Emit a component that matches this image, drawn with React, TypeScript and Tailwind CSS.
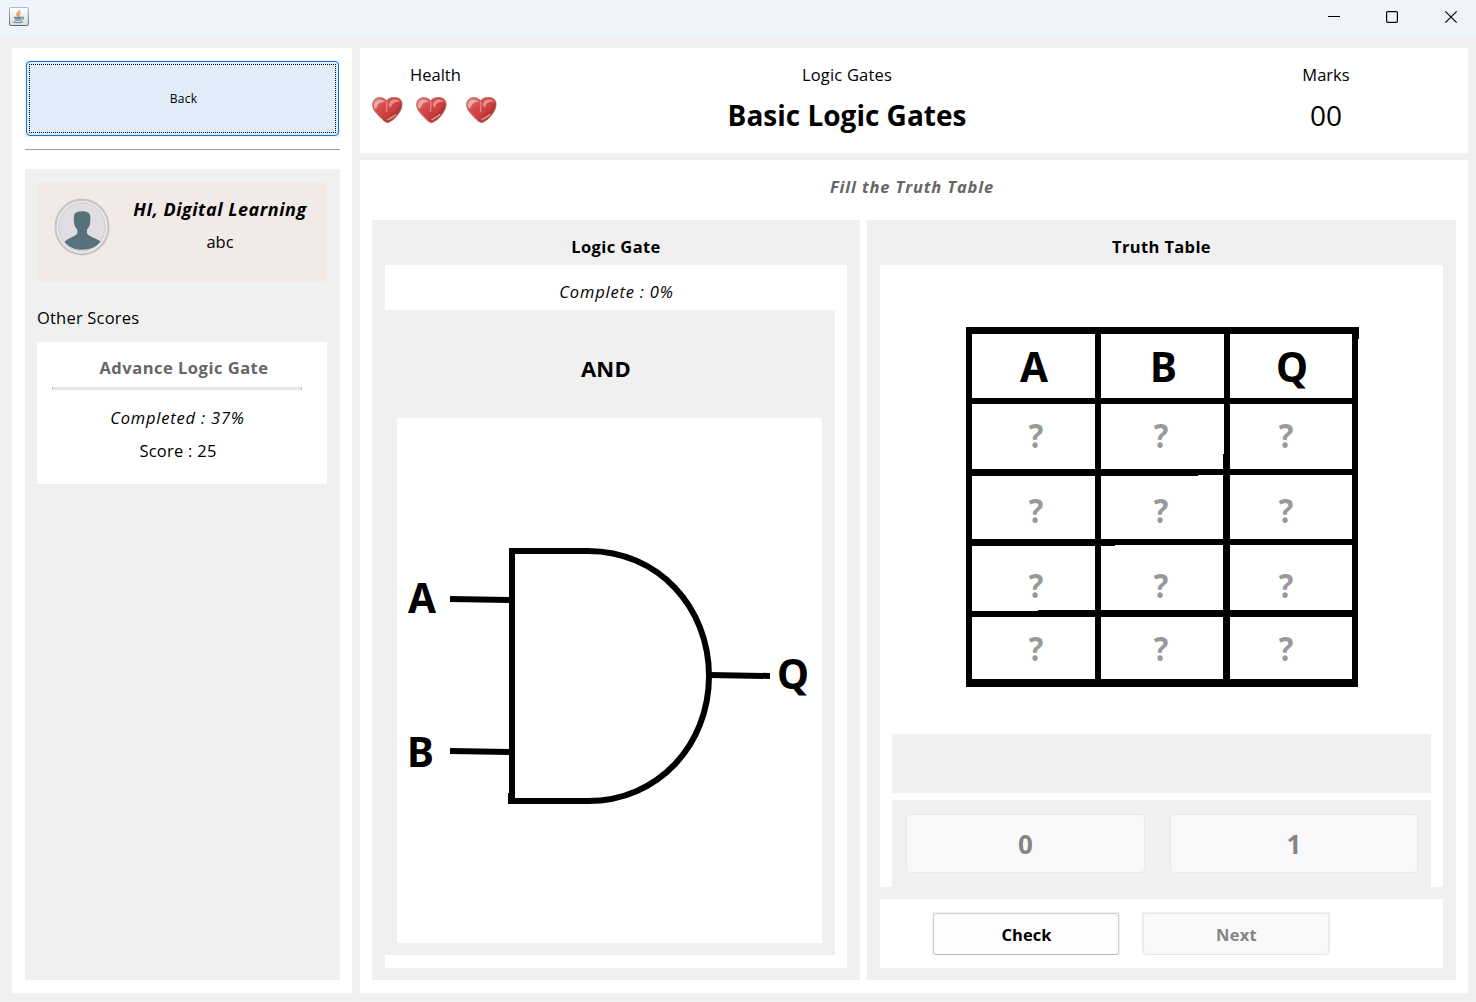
import React from "react";

function JavaIcon() {
  return (
    <svg className="ml-[9px] mt-[7px] block h-5 w-5" viewBox="0 0 20 20">
      <defs>
        <linearGradient id="cupFrame" x1="0" y1="0" x2="0" y2="1">
          <stop offset="0" stopColor="#a9b9c9" />
          <stop offset="1" stopColor="#52697d" />
        </linearGradient>
        <linearGradient id="cupFace" x1="0" y1="0" x2="0" y2="1">
          <stop offset="0" stopColor="#ffffff" />
          <stop offset="1" stopColor="#dedede" />
        </linearGradient>
      </defs>
      <rect x="0.5" y="0.5" width="18.800" height="18" rx="1.500" fill="url(#cupFace)" stroke="url(#cupFrame)" />
      <path d="M10.500 3.200c.6 1.700-2.800 2.300-2.600 4 .1.900 1 1.400 1.300 2.300M11.500 6c-1.500.5-2 1.200-1.500 2 .3.600.2 1.200-.4 1.500" fill="none" stroke="#ec8f4c" strokeWidth="1.500" />
      <path d="M4.800 10.300h8.200M5.400 11.700h7.200M6 13.200h6" stroke="#7390aa" strokeWidth="1.300" />
      <path d="M13 10.300c2.200-.8 2.200 1.600-.4 2.300" fill="none" stroke="#7390aa" strokeWidth="1.200" />
      <path d="M4 14.600c2 1.300 8 1.300 10 0" fill="none" stroke="#7390aa" strokeWidth="1.300" />
    </svg>
  );
}

function Heart() {
  return (
    <svg className="block h-[27px] w-[31px]" viewBox="0 0 31 27">
      <defs>
        <linearGradient id="heartFill" x1="0" y1="0" x2="1" y2="1">
          <stop offset="0" stopColor="#dd8a86" />
          <stop offset="0.350" stopColor="#d64a4c" />
          <stop offset="0.600" stopColor="#cb3c3e" />
          <stop offset="1" stopColor="#8e3530" />
        </linearGradient>
      </defs>
      <path d="M14.500 3.800C17 .6 21 0 24.500 .6c4 .8 6 3.700 5.500 7.700-.3 3.600-1.800 6.200-4.800 10.200-2.500 3.300-6 6-9.500 7.300-2.500-.6-5.500-3-7.500-5.300C5.500 17.300 1.500 14 .7 9.200.3 5 2 1.600 6 .8c3.500-.6 6.500.3 8.500 3z" fill="url(#heartFill)" stroke="#b0675e" strokeWidth="0.800" />
      <path d="M2 10c-.3-4 1.500-7 5-7.200 3-.1 5 .7 6 2.700-2-.8-4-.6-5.500.8C5.800 7.800 5 9 4.500 11c-.8.800-2.200.5-2.500-1z" fill="#f0c0bb" opacity="0.750" />
      <path d="M17 7.500c.2-3 2.500-4.900 6-5 3 0 4.500 1 5.100 2.400-2-.5-4.500-.2-6.300 1.200-1.400 1-2.500 2.500-2.900 4.600-.9-.4-2-1.700-1.900-3.200z" fill="#eab0a9" opacity="0.700" />
      <path d="M14.600 4.500c.9 3-.1 7-.1 10.500" fill="none" stroke="#e89a93" strokeWidth="1.300" opacity="0.800" />
      <path d="M28.600 8c-1 4.500-4 7.500-7 9.500-2 1.400-4 2.600-6 4.500" fill="none" stroke="#9c3530" strokeWidth="2.200" opacity="0.600" />
      <path d="M15.500 23c2-1.800 5.500-2.600 8.500-5.700" fill="none" stroke="#e5a59d" strokeWidth="1.600" opacity="0.850" />
      <path d="M3.500 15c2 2.600 5 5 7.500 8" fill="none" stroke="#e59c96" strokeWidth="1" opacity="0.700" />
    </svg>
  );
}

function Avatar() {
  return (
    <svg className="block h-[58px] w-[56px]" viewBox="0 0 56 58">
      <ellipse cx="28" cy="29" rx="26.500" ry="27.300" fill="#eeebea" stroke="#c6c6c6" strokeWidth="2.200" />
      <ellipse cx="28" cy="29" rx="23.300" ry="24.200" fill="#e0dee2" stroke="#cfcdd0" strokeWidth="1" />
      <path d="M20 17.500c.5-3 4-4.300 8.200-4.300 4.300 0 7.400 1.400 8 4.300.4 2 .2 4.500 0 6.500-.1 3-1.300 5.500-3.200 7.600v4c2.500 3.500 9 4.200 13.500 8-4 5.400-10.500 8.200-18.300 8.200-7.500 0-13.500-2.600-17.700-8 4-4 10-4.800 12.800-8.300v-4c-2-2-3.100-4.500-3.300-7.500-.2-2-.3-4.500 0-6.500z" fill="#58717c" />
    </svg>
  );
}

function AndGate() {
  return (
    <svg className="block h-[525px] w-[425px]" viewBox="397 418 425 525">
      <g fill="none" stroke="#000" strokeWidth="6">
        <path d="M512 801V551H588C658 551 709 607 709 676C709 745 658 801 588 801H509" />
        <path d="M450 599L512 600M450 751L512 752M709 675L770 676" />
      </g>
      <rect x="508" y="793" width="5" height="11" />
      <g fontFamily="'Noto Sans', sans-serif" fontWeight="700" fontSize="40.500">
        <text x="408" y="613.300">A</text>
        <text x="407" y="766.500">B</text>
        <text x="777" y="688.500">Q</text>
      </g>
    </svg>
  );
}

function TableLines() {
  return (
    <svg className="absolute left-[86px] top-[62px] block h-[361px] w-[394px]" viewBox="966 327 394 361">
      <path d="M966 327h393v12h-1v348h-392zM972 334v64h123v-64zM1101 334v64h123v-64zM1230 334v64h122v-64zM972 404v65h123v-65zM1101 404v65h122v-15h1v-50zM1230 404v65h122v-65zM972 476v63h123v-63zM1101 476v63h122v-64h-25v1zM1230 475v64h122v-64zM972 546v65h66v-1h57v-64zM1101 546v64h122v-65h-108v1zM1230 545v65h122v-65zM972 617v62h123v-62zM1101 617v62h122v-62zM1230 617v62h122v-62z" fillRule="evenodd" />
      <g fontFamily="'Noto Sans', sans-serif" fontWeight="700" fontSize="40.500">
        <text x="1020" y="381.500">A</text>
        <text x="1150" y="381.500">B</text>
        <text x="1276" y="381.500">Q</text>
      </g>
    </svg>
  );
}

const rows = ["h-[75px]", "h-[75px]", "h-[63px]", "h-[57px]"];

export default function App() {
  return (
    <div className="flex h-[1002px] w-[1476px] flex-col overflow-hidden bg-[#f0f0f0] font-['Open_Sans',sans-serif] text-[16.500px] leading-6 text-black">
      <header className="flex h-9 shrink-0 justify-between bg-[#eff3fb]">
        <JavaIcon />
        <svg className="mr-[18px] mt-[10px] block h-[14px] w-[131px]" viewBox="1327 10 131 14" fill="none" stroke="#000" strokeWidth="1.200">
          <path d="M1328 16.500h12" strokeWidth="1" />
          <rect x="1386.600" y="11.600" width="10.800" height="10.800" rx="1.200" />
          <path d="M1445.300 11.300l11.400 11.400M1456.700 11.300l-11.400 11.400" />
        </svg>
      </header>

      <main className="flex gap-2 pl-3 pt-3">
        <aside className="h-[945px] w-[340px] bg-white pl-[13px] pr-3 pt-3">
          <div className="h-[77px] bg-[#f0f0f0] p-px">
            <button className="flex h-[75px] w-full rounded-[4px] border border-[#0078d4] bg-[#e0edf9] p-0.5">
              <span className="flex h-full w-full items-center justify-center border border-dotted border-black pl-0.5 text-[12px] tracking-[0.200px]">Back</span>
            </button>
          </div>
          <div className="mt-3 h-px bg-[#a0a0a0]" />
          <section className="mt-[19px] h-[811px] bg-[#f0f0f0] px-3 pt-[13px]">
            <div className="flex h-[100px] w-[290px] bg-[#f2eae7] pl-[17px] pt-4">
              <Avatar />
              <div className="ml-[22px] w-[176px] text-center">
                <div className="-mt-px whitespace-nowrap text-[18px] font-bold italic tracking-[0.500px]">HI, Digital Learning</div>
                <div className="mt-[9px]">abc</div>
              </div>
            </div>
            <div className="mt-6 tracking-[0.200px]">Other Scores</div>
            <div className="mt-3 h-[142px] w-[290px] bg-white pt-[14px]">
              <div className="pl-1 text-center font-bold tracking-[0.500px] text-[#666]">Advance Logic Gate</div>
              <div className="ml-[15px] mt-[7px] h-[3px] w-[250px] border-x border-[#bcbcbc] bg-[#e6e6e6]" />
              <div className="mr-[9px] mt-4 text-center italic tracking-[0.800px]">Completed : 37%</div>
              <div className="mr-2 mt-[9px] text-center tracking-[0.250px]">Score : 25</div>
            </div>
          </section>
        </aside>

        <div className="flex w-[1108px] flex-col gap-[7px]">
          <section className="flex h-[105px] bg-white pl-3 pt-[15px]">
            <div className="w-[127px]">
              <div className="text-center">Health</div>
              <div className="mt-[10px] flex">
                <Heart />
                <div className="ml-[13px]"><Heart /></div>
                <div className="ml-[19px]"><Heart /></div>
              </div>
            </div>
            <div className="ml-[208px] w-[280px] text-center">
              <div className="tracking-[0.200px]">Logic Gates</div>
              <div className="mt-[9px] text-[28px] font-bold leading-[38px]">Basic Logic Gates</div>
            </div>
            <div className="ml-[289px] w-[100px] text-center">
              <div>Marks</div>
              <div className="mt-[9px] text-[28px] leading-[38px]">00</div>
            </div>
          </section>

          <section className="h-[833px] bg-white pl-3 pt-[15px]">
            <div className="w-[1080px] text-center font-bold italic tracking-[0.850px] text-[#666]">Fill the Truth Table</div>
            <div className="mt-[21px] flex gap-[7px]">
              <div className="h-[760px] w-[488px] bg-[#f0f0f0] pl-[13px] pt-[15px]">
                <h2 className="w-[462px] text-center font-bold tracking-[0.400px]">Logic Gate</h2>
                <div className="mt-[6px] h-[703px] w-[462px] bg-white pt-[15px]">
                  <div className="pl-px text-center italic tracking-[0.800px]">Complete : 0%</div>
                  <div className="mt-[6px] h-[645px] w-[450px] bg-[#f0f0f0] pl-3 pt-[43px]">
                    <div className="w-[418px] text-center text-[22px] font-bold leading-[30px] tracking-[0.300px]">AND</div>
                    <div className="mt-[35px] h-[525px] w-[425px] bg-white"><AndGate /></div>
                  </div>
                </div>
              </div>

              <div className="h-[760px] w-[589px] bg-[#f0f0f0] pl-[13px] pt-[15px]">
                <h2 className="w-[563px] text-center font-bold tracking-[0.350px]">Truth Table</h2>
                <div className="relative mt-[6px] h-[622px] w-[563px] bg-white">
                  <TableLines />
                  <div className="relative flex h-[469px] w-[563px] flex-col pl-[94px] pt-[133px]">
                    {rows.map((h, i) => (
                      <div key={i} className={`grid w-[375px] shrink-0 grid-cols-3 ${h}`}>
                        {[0, 1, 2].map((c) => (
                          <span key={c} className="h-[75px] text-center text-[34px] font-bold leading-[75px] text-[#999]"><span className="inline-block scale-x-90">?</span></span>
                        ))}
                      </div>
                    ))}
                  </div>
                  <div className="ml-3 h-[59px] w-[539px] bg-[#f0f0f0]" />
                  <div className="ml-3 mt-[7px] flex h-[87px] w-[539px] gap-[25px] bg-[#f0f0f0] pl-[14px] pt-[14px] text-[26px] font-bold text-[#858585]">
                    <button className="h-[59px] w-[239px] rounded-[4px] border border-[#e8e8e8] bg-[#f9f9f9]">0</button>
                    <button className="h-[59px] w-[248px] rounded-[4px] border border-[#e8e8e8] bg-[#f9f9f9]">1</button>
                  </div>
                </div>
                <div className="mt-3 flex h-[69px] w-[563px] gap-[22px] bg-white pl-[52px] pt-[13px]">
                  <div className="h-[43px] w-[188px] bg-[#f0f0f0] p-px pb-0">
                    <button className="h-[42px] w-full rounded-[4px] border border-[#cfcfcf] border-b-[#b5b5b5] bg-[#fdfdfd] pl-px pt-0.5 font-bold">Check</button>
                  </div>
                  <div className="h-[43px] w-[188px] bg-[#f0f0f0] p-px pb-0">
                    <button className="h-[42px] w-full rounded-[4px] border border-[#e8e8e8] bg-[#f9f9f9] pl-px pt-0.5 font-bold tracking-[0.300px] text-[#858585]">Next</button>
                  </div>
                </div>
              </div>
            </div>
          </section>
        </div>
      </main>
    </div>
  );
}
